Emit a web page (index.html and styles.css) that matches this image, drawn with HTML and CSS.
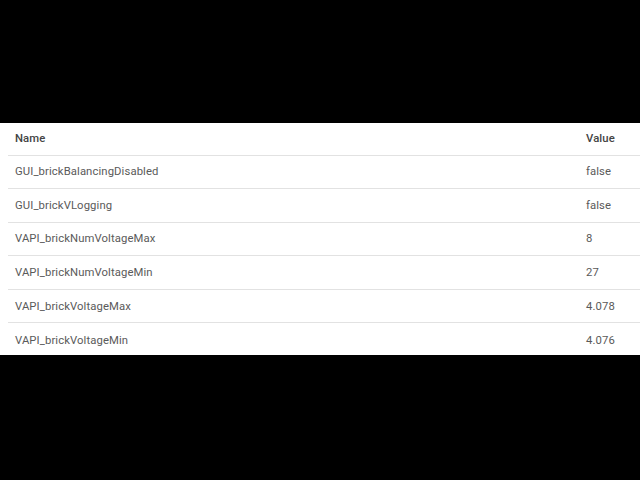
FILE: index.html
```html
<!DOCTYPE html>
<html>
<head>
    <title>Parameters</title>
    <meta name="viewport" content="width=device-width, initial-scale=1.0">
    <link rel="stylesheet" href="styles.css">
</head>
<body>
    <div class="panel">
        <table class="params">
            <thead>
                <tr><th>Name</th><th class="val">Value</th></tr>
            </thead>
            <tbody>
                <tr><td>GUI_brickBalancingDisabled</td><td class="val">false</td></tr>
                <tr><td>GUI_brickVLogging</td><td class="val">false</td></tr>
                <tr><td>VAPI_brickNumVoltageMax</td><td class="val">8</td></tr>
                <tr><td>VAPI_brickNumVoltageMin</td><td class="val">27</td></tr>
                <tr><td>VAPI_brickVoltageMax</td><td class="val">4.078</td></tr>
                <tr><td>VAPI_brickVoltageMin</td><td class="val">4.076</td></tr>
            </tbody>
        </table>
    </div>
</body>
</html>
```

FILE: styles.css
```css
* {
    margin: 0;
    padding: 0;
    box-sizing: border-box;
}

body {
    background: #000;
    width: 640px;
    height: 480px;
    padding-top: 123px;
    font-family: Roboto, 'Liberation Sans', sans-serif;
}

.panel {
    background: #fff;
    height: 232px;
    padding-left: 8px;
}

.params {
    width: 100%;
    border-collapse: collapse;
}

.params th,
.params td {
    text-align: left;
    font-size: 11.3px;
    letter-spacing: 0.1px;
    color: #5a5a5a;
    padding: 0 0 0 7px;
    border-bottom: 1px solid #e2e2e2;
}

.params th {
    height: 32px;
    font-weight: 500;
    color: #444;
}

.params td {
    height: 33.6px;
}

.params tbody tr:last-child td {
    border-bottom: none;
}

.params .val {
    width: 61px;
}
```
